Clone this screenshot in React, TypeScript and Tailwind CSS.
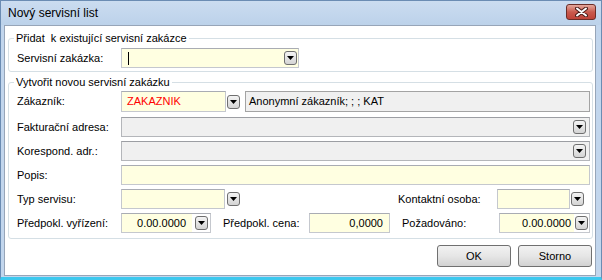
import React from 'react';

function DropBtn() {
  return (
    <span className="flex h-[14px] w-[13px] shrink-0 items-center justify-center rounded-[3px] border border-[#6f6f6f] bg-gradient-to-b from-[#f4f4f4] to-[#d4d4d4]">
      <svg width="7" height="4" viewBox="0 0 7 4">
        <path d="M0 0h7L3.5 4z" fill="#000" />
      </svg>
    </span>
  );
}

const yellowBox =
  'h-full border border-[#c5c8ce] border-t-[#a9acb3] bg-[#ffffe1]';
const grayBox =
  'h-full border border-[#b4b6ba] border-t-[#9c9ea3] bg-[#f0f0f0]';

function Label({ className, children }: { className: string; children: React.ReactNode }) {
  return <span className={`${className} shrink-0 whitespace-nowrap`}>{children}</span>;
}

export default function App() {
  return (
    <div className="flex h-[280px] w-[602px] flex-col border border-b-[3px] border-[#6b8cb3] border-b-[#3cc8ee] bg-[#c2d6ed] font-['Liberation_Sans',Arial,sans-serif] text-[11px] text-black">
      {/* title bar */}
      <div className="flex h-[24px] items-start justify-between bg-gradient-to-b from-[#cbdcf0] to-[#bcd2ea]">
        <span className="pl-[7px] pt-[5px] text-[12px] leading-[14px]">Nový servisní list</span>
        <span className="mr-[5px] mt-[3px] flex h-[16px] w-[30px] items-center justify-center rounded-[3px] border border-[#6b2d27] bg-gradient-to-b from-[#e3a79c] via-[#c95a4d] to-[#bf4338]">
          <svg width="13" height="10" viewBox="0 0 13 10">
            <path d="M2 1.5l9 7M11 1.5l-9 7" stroke="#4a1d19" strokeWidth="4" strokeLinecap="round" />
            <path d="M2 1.5l9 7M11 1.5l-9 7" stroke="#fff" strokeWidth="2" strokeLinecap="round" />
          </svg>
        </span>
      </div>

      {/* body */}
      <div className="flex flex-1 pl-[3px] pr-[5px]">
        <div className="flex flex-1 flex-col border border-[#97a5b8] bg-white">
          {/* group 1 */}
          <fieldset className="ml-[3px] mt-[5px] w-[585px] rounded-[3px] border border-[#d5dfe5] pb-[3px] pl-[8px] pr-[2px] pt-[3px]">
            <legend className="-ml-[3px] px-[2px] leading-[14px]">Přidat&nbsp; k existující servisní zakázce</legend>
            <div className="flex h-[20px] items-center">
              <Label className="w-[104px]">Servisní zakázka:</Label>
              <div className={`${yellowBox} flex w-[178px] items-center justify-between pl-[6px] pr-[1px]`}>
                <span className="h-[13px] w-[1px] bg-black" />
                <DropBtn />
              </div>
            </div>
          </fieldset>

          {/* group 2 */}
          <fieldset className="ml-[3px] mt-[3px] w-[585px] rounded-[3px] border border-[#d5dfe5] pb-[5px] pl-[8px] pr-[2px] pt-[2px]">
            <legend className="-ml-[3px] px-[2px] leading-[14px]">Vytvořit novou servisní zakázku</legend>
            <div className="flex flex-col gap-[4px]">
              <div className="flex h-[21px] items-center">
                <Label className="w-[104px]">Zákazník:</Label>
                <div className={`${yellowBox} flex w-[105px] items-center pl-[5px] text-[#ff0000]`}>ZAKAZNIK</div>
                <span className="ml-[1px]">
                  <DropBtn />
                </span>
                <div className="ml-[5px] flex h-full flex-1 items-center border border-[#a3a3a3] bg-[#f0f0f0] pl-[3px]">
                  Anonymní zákazník; ; ; KAT
                </div>
              </div>

              <div className="mt-[1px] flex h-[20px] items-center">
                <Label className="w-[104px]">Fakturační adresa:</Label>
                <div className={`${grayBox} flex flex-1 items-center justify-end pr-[3px]`}>
                  <DropBtn />
                </div>
              </div>

              <div className="flex h-[20px] items-center">
                <Label className="w-[104px]">Korespond. adr.:</Label>
                <div className={`${grayBox} flex flex-1 items-center justify-end pr-[3px]`}>
                  <DropBtn />
                </div>
              </div>

              <div className="flex h-[20px] items-center">
                <Label className="w-[104px]">Popis:</Label>
                <div className={`${yellowBox} flex-1`} />
              </div>

              <div className="flex h-[20px] items-center">
                <Label className="w-[104px]">Typ servisu:</Label>
                <div className={`${yellowBox} w-[104px]`} />
                <span className="ml-[2px]">
                  <DropBtn />
                </span>
                <Label className="ml-[158px] w-[99px]">Kontaktní osoba:</Label>
                <div className={`${yellowBox} w-[73px]`} />
                <span className="ml-[1px]">
                  <DropBtn />
                </span>
              </div>

              <div className="flex h-[20px] items-center">
                <Label className="w-[104px]">Předpokl. vyřízení:</Label>
                <div className="flex h-full w-[90px] items-center border border-[#c5c8ce] border-t-[#a9acb3] bg-white pr-[2px]">
                  <span className="flex h-full flex-1 items-center justify-end bg-[#ffffe1] pr-[6px]">0.00.0000</span>
                  <span className="ml-[3px]">
                    <DropBtn />
                  </span>
                </div>
                <Label className="ml-[12px] w-[86px]">Předpokl. cena:</Label>
                <div className={`${yellowBox} flex w-[81px] items-center justify-end pr-[6px]`}>0,0000</div>
                <Label className="ml-[12px] w-[97px]">Požadováno:</Label>
                <div className="flex h-full w-[91px] items-center border border-[#c5c8ce] border-t-[#a9acb3] bg-white pr-[1px]">
                  <span className="flex h-full flex-1 items-center justify-end bg-[#ffffe1] pr-[3px]">0.00.0000</span>
                  <span className="ml-[1px]">
                    <DropBtn />
                  </span>
                </div>
              </div>
            </div>
          </fieldset>

          {/* buttons */}
          <div className="mt-[6px] flex justify-end gap-[7px] pr-[3px]">
            <button className="h-[22px] w-[74px] rounded-[3px] border border-[#707070] bg-gradient-to-b from-[#f2f2f2] via-[#e6e6e6] to-[#d2d2d2]">
              OK
            </button>
            <button className="h-[22px] w-[74px] rounded-[3px] border border-[#707070] bg-gradient-to-b from-[#f2f2f2] via-[#e6e6e6] to-[#d2d2d2]">
              Storno
            </button>
          </div>
        </div>
      </div>
      <div className="h-[1px]" />
    </div>
  );
}
